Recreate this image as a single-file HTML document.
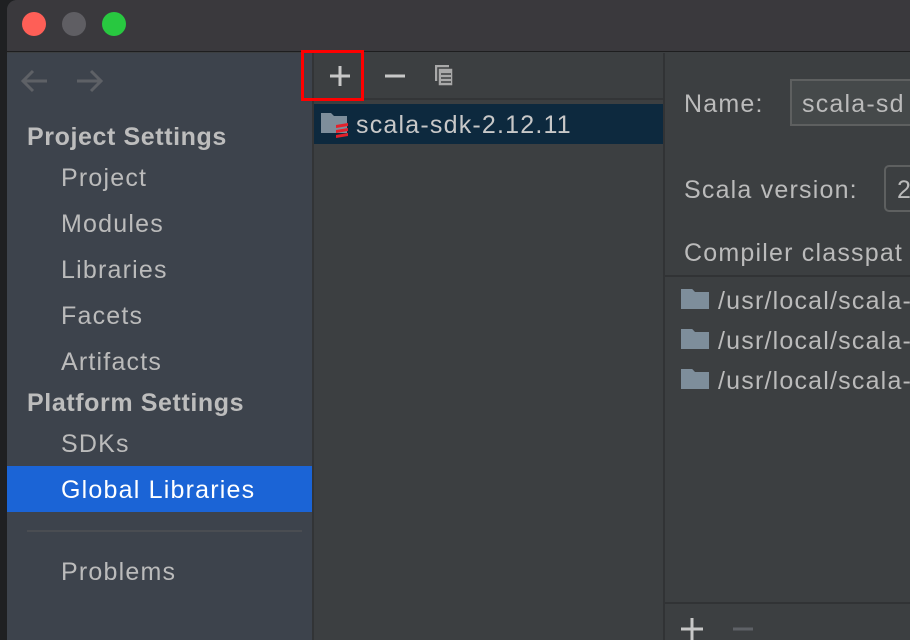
<!DOCTYPE html>
<html><head><meta charset="utf-8"><style>
*{margin:0;padding:0;box-sizing:border-box}
body{width:910px;height:640px;overflow:hidden;background:#1f2022;font-family:"Liberation Sans",sans-serif;position:relative}
.win{position:absolute;left:7px;top:0;width:903px;height:640px;background:#3c3f41;border-top-left-radius:10px;overflow:hidden}
.title{position:absolute;left:0;top:0;right:0;height:52px;background:#3a393d;border-bottom:1px solid #1e1e1f}
.dot{position:absolute;top:12px;width:24px;height:24px;border-radius:50%}
.side{position:absolute;left:0;top:53px;width:305px;bottom:0;background:#3d434c}
.sep{position:absolute;left:305px;top:53px;width:2px;bottom:0;background:#323436}
.mid{position:absolute;left:307px;top:53px;width:349px;bottom:0;background:#3c3f41}
.sep2{position:absolute;left:656px;top:53px;width:2px;bottom:0;background:#313335}
.t{position:absolute;color:#bbbbbb;font-size:25px;letter-spacing:1.2px;white-space:nowrap}
.h{font-weight:bold;color:#bdbdbd;letter-spacing:0.6px}
</style></head><body>
<div class="win">
 <div class="title">
  <div class="dot" style="left:15px;background:#fe5f57"></div>
  <div class="dot" style="left:55px;background:#5f5e63"></div>
  <div class="dot" style="left:95px;background:#28c840"></div>
 </div>
 <div class="side">
  <svg style="position:absolute;left:14px;top:16px" width="90" height="24"><g stroke="#5e6166" stroke-width="3" fill="none"><path d="M2 12H26M12 2L2 12 12 22"/><path d="M56 12H80M70 2L80 12 70 22"/></g></svg>
  <div class="t h" style="left:20px;top:70px">Project Settings</div>
  <div class="t" style="left:54px;top:111px">Project</div>
  <div class="t" style="left:54px;top:157px">Modules</div>
  <div class="t" style="left:54px;top:203px">Libraries</div>
  <div class="t" style="left:54px;top:249px">Facets</div>
  <div class="t" style="left:54px;top:295px">Artifacts</div>
  <div class="t h" style="left:20px;top:336px">Platform Settings</div>
  <div class="t" style="left:54px;top:377px">SDKs</div>
  <div style="position:absolute;left:0;top:413px;width:305px;height:46px;background:#1b64d6"></div>
  <div class="t" style="left:54px;top:423px;color:#fff">Global Libraries</div>
  <div style="position:absolute;left:20px;top:477px;width:275px;height:2px;background:#4a4d52"></div>
  <div class="t" style="left:54px;top:505px">Problems</div>
 </div>
 <div class="sep"></div>
 <div class="mid">
  <div style="position:absolute;left:0;top:45px;right:0;height:2px;background:#333537"></div>
  <svg style="position:absolute;left:9px;top:10px" width="140" height="26"><g stroke="#c8c8c8" stroke-width="3"><path d="M17 3V23M7 13H27"/><path d="M62 13H82"/></g>
   <rect x="112" y="2" width="14" height="16" fill="#a9a9a9"/><rect x="115" y="5" width="15" height="18" fill="#a9a9a9" stroke="#3c3f41" stroke-width="1.5"/><g stroke="#3c3f41" stroke-width="1.5"><path d="M118 11H128M118 15H128M118 19H128"/></g></svg>
  <div style="position:absolute;left:-13px;top:-3px;width:63px;height:51px;border:3px solid #ff0000"></div>
  <div style="position:absolute;left:0;top:51px;width:349px;height:40px;background:#0d293e"></div>
  <svg style="position:absolute;left:6px;top:57px" width="32" height="30"><path d="M1 3H11L14 6H27V23H1Z" fill="#7e8e9b"/><g fill="#e3212b"><path d="M16 15l12-2v3l-12 2z"/><path d="M16 20l12-2v3l-12 2z"/><path d="M16 25l12-2v3l-12 2z"/></g></svg>
  <div class="t" style="left:42px;top:58px;color:#c8c8c8">scala-sdk-2.12.11</div>
 </div>
 <div class="sep2"></div>
 <div class="t" style="left:677px;top:90px">Name:</div>
 <div style="position:absolute;left:783px;top:79px;width:140px;height:47px;background:#45494a;border:2px solid #5e6060"></div>
 <div class="t" style="left:795px;top:90px">scala-sd</div>
 <div class="t" style="left:677px;top:176px">Scala version:</div>
 <div style="position:absolute;left:877px;top:165px;width:60px;height:47px;border:2px solid #5e6060;border-radius:5px"></div>
 <div class="t" style="left:890px;top:176px">2</div>
 <div class="t" style="left:677px;top:239px">Compiler classpat</div>
 <div style="position:absolute;left:658px;top:275px;right:0;height:2px;background:#313335"></div>
 <div style="position:absolute;left:658px;top:602px;right:0;height:2px;background:#313335"></div>
 <div style="position:absolute;left:674px;top:289px;width:28px;height:20px;background:#7e8e9b;clip-path:polygon(0 0,40% 0,50% 15%,100% 15%,100% 100%,0 100%)"></div>
 <div class="t" style="left:711px;top:287px">/usr/local/scala-</div>
 <div style="position:absolute;left:674px;top:329px;width:28px;height:20px;background:#7e8e9b;clip-path:polygon(0 0,40% 0,50% 15%,100% 15%,100% 100%,0 100%)"></div>
 <div class="t" style="left:711px;top:327px">/usr/local/scala-</div>
 <div style="position:absolute;left:674px;top:369px;width:28px;height:20px;background:#7e8e9b;clip-path:polygon(0 0,40% 0,50% 15%,100% 15%,100% 100%,0 100%)"></div>
 <div class="t" style="left:711px;top:367px">/usr/local/scala-</div>
 <svg style="position:absolute;left:672px;top:616px" width="80" height="24"><g stroke-width="3"><path d="M13 2V24M2 13H24" stroke="#c8c8c8"/><path d="M54 13H74" stroke="#5e6166"/></g></svg>
</div>
</body></html>
